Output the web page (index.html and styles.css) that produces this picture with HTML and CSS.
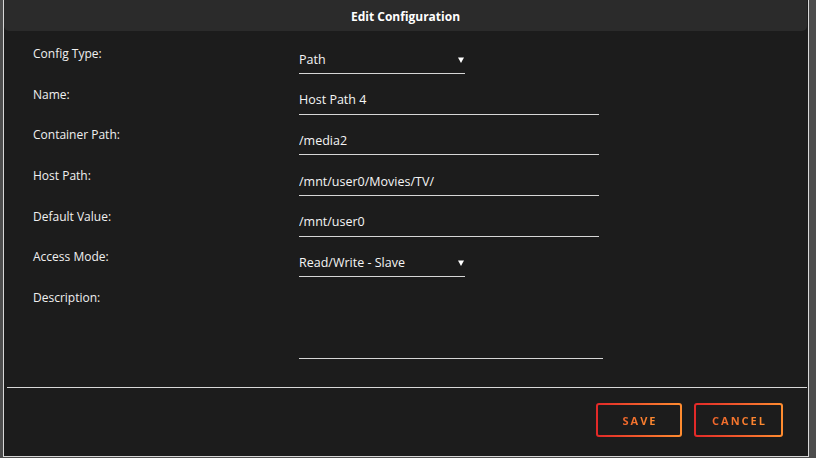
FILE: index.html
```html
<!DOCTYPE html>
<html>
<head>
<meta charset="utf-8">
<link rel="stylesheet" href="styles.css">
</head>
<body>
<div class="dialog">
  <div class="titlebar">Edit Configuration</div>
  <form class="form">
    <div class="row">
      <label class="label">Config Type:</label>
      <div class="field select"><span>Path</span><svg class="arrow" width="6" height="6" viewBox="0 0 6 6"><path d="M0 0.5H6L3 6Z" fill="#fff"/></svg></div>
    </div>
    <div class="row">
      <label class="label">Name:</label>
      <input class="field text" value="Host Path 4">
    </div>
    <div class="row">
      <label class="label">Container Path:</label>
      <input class="field text" value="/media2">
    </div>
    <div class="row">
      <label class="label">Host Path:</label>
      <input class="field text" value="/mnt/user0/Movies/TV/">
    </div>
    <div class="row">
      <label class="label">Default Value:</label>
      <input class="field text" value="/mnt/user0">
    </div>
    <div class="row">
      <label class="label">Access Mode:</label>
      <div class="field select"><span>Read/Write - Slave</span><svg class="arrow" width="6" height="6" viewBox="0 0 6 6"><path d="M0 0.5H6L3 6Z" fill="#fff"/></svg></div>
    </div>
    <div class="row row-desc">
      <label class="label">Description:</label>
      <textarea class="field area"></textarea>
    </div>
  </form>
  <div class="rule"></div>
  <div class="actions">
    <button class="btn btn-save"><span>SAVE</span></button>
    <button class="btn btn-cancel"><span>CANCEL</span></button>
  </div>
</div>
</body>
</html>
```
FILE: styles.css
```css
* { box-sizing: border-box; }
html, body { margin: 0; padding: 0; }
body {
  width: 816px;
  height: 458px;
  overflow: hidden;
  background: #4d4d4d;
  font-family: "Open Sans", "Noto Sans", sans-serif;
  color: #f2f2f2;
}
.dialog {
  margin-left: 3px;
  width: 806px;
  height: 457px;
  background: #1c1c1c;
  border: 1px solid #d8d8d8;
  border-top: none;
  display: flex;
  flex-direction: column;
}
.titlebar {
  height: 31px;
  margin: 0 1px 0 0;
  background: #2b2b2b;
  border-radius: 0 0 5px 5px;
  font-size: 12px;
  font-weight: 700;
  line-height: 34px;
  text-align: center;
  color: #ffffff;
}
.form {
  padding: 15px 0 0 29px;
  display: flex;
  flex-direction: column;
}
.row {
  display: flex;
  align-items: flex-start;
  height: 40.7px;
}
.label {
  width: 266px;
  flex: none;
  font-size: 12px;
  line-height: 16px;
  color: #f0f0f0;
}
.field {
  margin-top: 2px;
  height: 26px;
  padding: 0 0 3px 0;
  background: transparent;
  border: none;
  border-bottom: 1px solid #d6d6d6;
  color: #f5f5f5;
  font-family: "Open Sans", "Noto Sans", sans-serif;
  font-size: 12.5px;
  outline: none;
}
.text { width: 300px; }
.select {
  width: 166px;
  display: flex;
  align-items: center;
  justify-content: space-between;
  padding-right: 1px;
}
.arrow { margin-top: 1px; }
.row-desc { height: auto; }
.area {
  width: 304px;
  height: 67px;
  resize: none;
}
.rule {
  margin: 28px 1px 0 3px;
  height: 1px;
  background: #d8d8d8;
}
.actions {
  display: flex;
  justify-content: flex-end;
  gap: 12px;
  padding: 15px 25px 0 0;
}
.btn {
  height: 34px;
  padding: 0;
  border: 2px solid transparent;
  border-radius: 3px;
  background: linear-gradient(#1c1c1c, #1c1c1c) padding-box,
              linear-gradient(90deg, #e22828, #ff8d30) border-box;
  font-family: "Open Sans", "Noto Sans", sans-serif;
  font-size: 11px;
  font-weight: 700;
  letter-spacing: 2px;
  cursor: pointer;
}
.btn-save { width: 86px; }
.btn-cancel { width: 89px; }
.btn span {
  padding-left: 2px;
  background: linear-gradient(90deg, #f0642c, #ff8d30);
  -webkit-background-clip: text;
  background-clip: text;
  color: transparent;
}
```
